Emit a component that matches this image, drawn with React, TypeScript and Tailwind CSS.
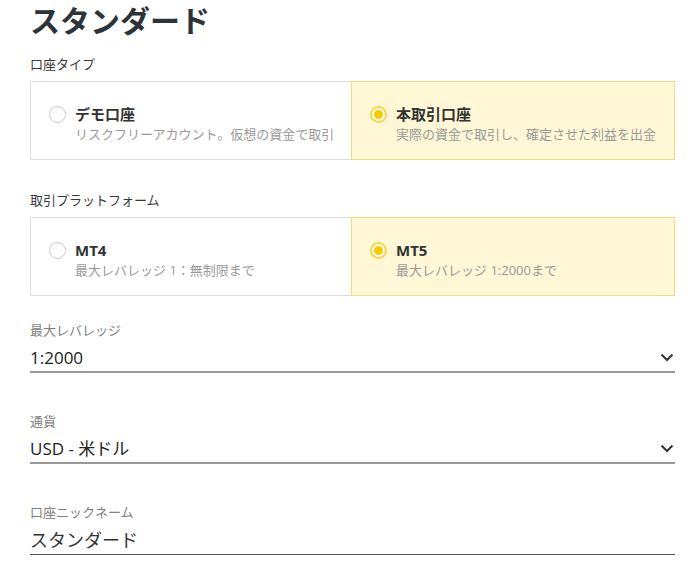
import * as React from "react";

type Option = { title: string; sub: string };

function Radio({ checked }: { checked: boolean }) {
    if (checked) {
        return (
            <span className="mt-[2px] flex h-[17px] w-[17px] shrink-0 items-center justify-center rounded-full border-2 border-[#f7d64a] bg-white">
                <span className="h-[9px] w-[9px] rounded-full bg-[#f9c900]" />
            </span>
        );
    }
    return <span className="mt-[2px] h-[17px] w-[17px] shrink-0 rounded-full border border-[#c9c9c9] bg-white" />;
}

function OptionCards({ options, selected }: { options: Option[]; selected: number }) {
    return (
        <div className="grid grid-cols-[321px_1fr]">
            {options.map((o, i) => {
                const on = i === selected;
                return (
                    <div
                        key={o.title}
                        className={
                            on
                                ? "flex h-[79px] items-start gap-[9px] border border-[#f3dc79] bg-[#fff7d5] pl-[18px] pt-[22px]"
                                : "flex h-[79px] items-start gap-[9px] border border-r-0 border-[#dedede] bg-white pl-[18px] pt-[22px]"
                        }
                    >
                        <Radio checked={on}/>
                        <div className="flex flex-col">
                            <span className="text-[15px] font-bold leading-[20px] text-[#333]">{o.title}</span>
                            <span className="text-[13px] leading-[20px] text-[#9a9a9a]">{o.sub}</span>
                        </div>
                    </div>
                );
            })}
        </div>
    );
}

function Chevron() {
    return (
        <svg width="14" height="9" viewBox="0 0 14 9" className="mr-[1px]">
            <path d="M1.5 1.5 L7 7 L12.5 1.5" fill="none" stroke="#333" strokeWidth="2"/>
        </svg>
    );
}

function Field({ label, value, select, lineClass, valueClass }: {
    label: string;
    value: string;
    select?: boolean;
    lineClass: string;
    valueClass: string
}) {
    return (
        <div className="flex flex-col">
            <span className="text-[13px] leading-[18px] text-[#808080]">{label}</span>
            <div className={`mt-[5px] flex h-[29px] items-center justify-between ${lineClass}`}>
                <span className={valueClass}>{value}</span>
                {select && <Chevron/>}
            </div>
        </div>
    );
}

export default function App() {
    return (
        <div className="min-h-[581px] w-[700px] bg-white pl-[30px] pr-[25px] font-['Open_Sans','Noto_Sans_CJK_JP',sans-serif]">
            <h1 className="pt-[1px] text-[30px] font-bold leading-[40px] text-[#2d3439]">スタンダード</h1>

            <div className="mt-[14px] text-[13px] leading-[18px] text-[#3a3a3a]">口座タイプ</div>
            <div className="mt-[8px]">
                <OptionCards
                    selected={1}
                    options={[
                        {title: "デモ口座", sub: "リスクフリーアカウント。仮想の資金で取引"},
                        {title: "本取引口座", sub: "実際の資金で取引し、確定させた利益を出金"},
                    ]}
                />
            </div>

            <div className="mt-[31px] text-[13px] leading-[18px] text-[#3a3a3a]">取引プラットフォーム</div>
            <div className="mt-[8px]">
                <OptionCards
                    selected={1}
                    options={[
                        {title: "MT4", sub: "最大レバレッジ 1：無制限まで"},
                        {title: "MT5", sub: "最大レバレッジ 1:2000まで"},
                    ]}
                />
            </div>

            <div className="mt-[25px] flex flex-col gap-[39px]">
                <Field label="最大レバレッジ" value="1:2000" select lineClass="border-b-2 border-[#9a9a9a]"
                       valueClass="text-[17px] text-[#222]"/>
                <Field label="通貨" value="USD - 米ドル" select lineClass="border-b-2 border-[#9a9a9a]"
                       valueClass="text-[17px] text-[#222]"/>
                <Field label="口座ニックネーム" value="スタンダード" lineClass="border-b border-[#555]"
                       valueClass="text-[18px] text-[#333]"/>
            </div>
        </div>
    );
}
